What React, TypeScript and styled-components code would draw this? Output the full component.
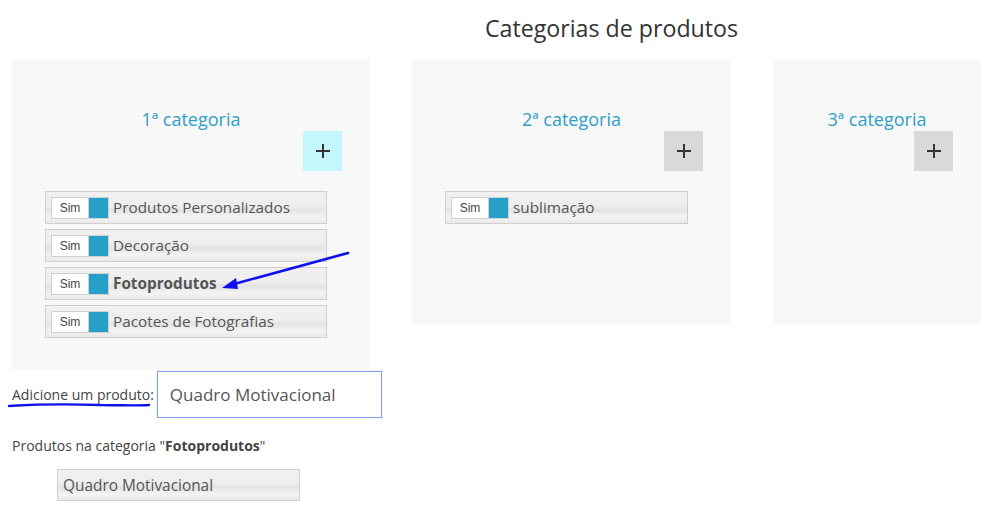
import React from 'react'
import styled, { createGlobalStyle } from 'styled-components'

const GlobalStyle = createGlobalStyle`
  html, body {
    margin: 0;
    padding: 0;
    background: #fff;
    font-family: 'Open Sans', 'Liberation Sans', sans-serif;
    color: #444;
  }
  * {
    box-sizing: border-box;
  }
`

const Page = styled.div`
  position: relative;
  width: 993px;
  height: 507px;
  padding: 0 12px;
  overflow: hidden;
`

const Heading = styled.h1`
  margin: 0 0 14px;
  padding: 12px 0 0 230px;
  font-size: 23.2px;
  line-height: 33px;
  font-weight: 400;
  text-align: center;
  color: #333;
`

const Columns = styled.div`
  display: flex;
  align-items: flex-start;
  gap: 42px;
`

const Panel = styled.section<{ $width: number; $height: number }>`
  width: ${(p) => p.$width}px;
  height: ${(p) => p.$height}px;
  background: #f8f8f8;
  padding: 48px 43px 0 33px;
  display: flex;
  flex-direction: column;
`

const PanelTitle = styled.h2`
  margin: 0 0 0 10px;
  font-size: 18px;
  line-height: 24px;
  font-weight: 400;
  text-align: center;
  color: #2e9fc6;
`

const AddButton = styled.button<{ $active?: boolean }>`
  align-self: flex-end;
  margin-right: -15px;
  width: 39px;
  height: 40px;
  border: none;
  padding: 0;
  background: ${(p) => (p.$active ? '#c4f7fb' : '#d9d9d9')};
  display: flex;
  align-items: center;
  justify-content: center;
  cursor: pointer;
`

const List = styled.ul`
  list-style: none;
  margin: 20px 0 0;
  padding: 0;
  display: flex;
  flex-direction: column;
  gap: 5px;
`

const Item = styled.li`
  height: 33px;
  display: flex;
  align-items: center;
  border: 1px solid #cfcfcf;
  background: linear-gradient(
    to bottom,
    #f0f0f0 0%,
    #eeeeee 45%,
    #e3e3e3 58%,
    #f3f3f3 80%,
    #e9e9e9 100%
  );
  padding-left: 5px;
`

const Toggle = styled.span`
  display: flex;
  height: 22px;
  border: 1px solid #cfcfcf;
  flex-shrink: 0;
`

const ToggleLabel = styled.span`
  width: 36px;
  background: #fff;
  font-family: 'Liberation Sans', Arial, sans-serif;
  font-size: 12px;
  color: #444;
  display: flex;
  align-items: center;
  justify-content: center;
`

const ToggleKnob = styled.span`
  width: 20px;
  background: #27a0c9;
  border-left: 1px solid #cfcfcf;
`

const ItemText = styled.span<{ $bold?: boolean }>`
  margin: 0 0 2px 4px;
  font-size: 15.3px;
  color: #555;
  font-weight: ${(p) => (p.$bold ? 700 : 400)};
  white-space: nowrap;
`

const AddRow = styled.div`
  position: relative;
  display: flex;
  align-items: center;
  margin-top: 1px;
`

const Label = styled.label`
  font-size: 14px;
  color: #444;
`

const Input = styled.input`
  margin-left: 3px;
  width: 225px;
  height: 47px;
  border: 1px solid #7f9ff0;
  box-shadow: 0 0 1px #a9c0f5;
  padding: 0 12px;
  font-family: 'Open Sans', 'Liberation Sans', sans-serif;
  font-size: 17px;
  color: #555;
  outline: none;
`

const Caption = styled.p`
  margin: 18px 0 0;
  font-size: 14px;
  line-height: 20px;
  color: #444;
`

const Product = styled.div`
  margin: 13px 0 0 45px;
  width: 243px;
  height: 32px;
  display: flex;
  align-items: center;
  padding: 1px 0 0 5px;
  border: 1px solid #cfcfcf;
  background: linear-gradient(
    to bottom,
    #f0f0f0 0%,
    #eeeeee 45%,
    #e3e3e3 58%,
    #f3f3f3 80%,
    #e9e9e9 100%
  );
  font-size: 15.4px;
  color: #555;
`

const Overlay = styled.svg`
  position: absolute;
  left: 0;
  top: 0;
  pointer-events: none;
`

const PlusIcon = () => (
  <svg width="16" height="16" viewBox="0 0 16 16">
    <path d="M8 1v14M1 8h14" stroke="#333" strokeWidth="2" />
  </svg>
)

type Category = {
  title: string
  width: number
  height: number
  active?: boolean
  items: { name: string; bold?: boolean }[]
}

const categories: Category[] = [
  {
    title: '1ª categoria',
    width: 358,
    height: 311,
    active: true,
    items: [
      { name: 'Produtos Personalizados' },
      { name: 'Decoração' },
      { name: 'Fotoprodutos', bold: true },
      { name: 'Pacotes de Fotografias' },
    ],
  },
  { title: '2ª categoria', width: 319, height: 266, items: [{ name: 'sublimação' }] },
  { title: '3ª categoria', width: 208, height: 266, items: [] },
]

export default function App() {
  return (
    <Page>
      <GlobalStyle />
      <Heading>Categorias de produtos</Heading>
      <Columns>
        {categories.map((cat) => (
          <Panel key={cat.title} $width={cat.width} $height={cat.height}>
            <PanelTitle>{cat.title}</PanelTitle>
            <AddButton $active={cat.active}>
              <PlusIcon />
            </AddButton>
            {cat.items.length > 0 && (
              <List>
                {cat.items.map((item) => (
                  <Item key={item.name}>
                    <Toggle>
                      <ToggleLabel>Sim</ToggleLabel>
                      <ToggleKnob />
                    </Toggle>
                    <ItemText $bold={item.bold}>{item.name}</ItemText>
                  </Item>
                ))}
              </List>
            )}
          </Panel>
        ))}
      </Columns>
      <AddRow>
        <Label>Adicione um produto:</Label>
        <Input defaultValue="Quadro Motivacional" />
      </AddRow>
      <Caption>
        Produtos na categoria "<b>Fotoprodutos</b>"
      </Caption>
      <Product>Quadro Motivacional</Product>

      {/* hand-drawn annotations */}
      <Overlay width="993" height="507">
        <path d="M348 253 L234 284" stroke="#1010ee" strokeWidth="2.6" fill="none" strokeLinecap="round" />
        <path d="M222 288 L236 278 L238 289 Z" fill="#1010ee" />
        <path
          d="M9 406 C40 404 70 404 100 405 C120 405 135 406 149 405"
          stroke="#1010ee"
          strokeWidth="2.4"
          fill="none"
          strokeLinecap="round"
        />
      </Overlay>
    </Page>
  )
}
